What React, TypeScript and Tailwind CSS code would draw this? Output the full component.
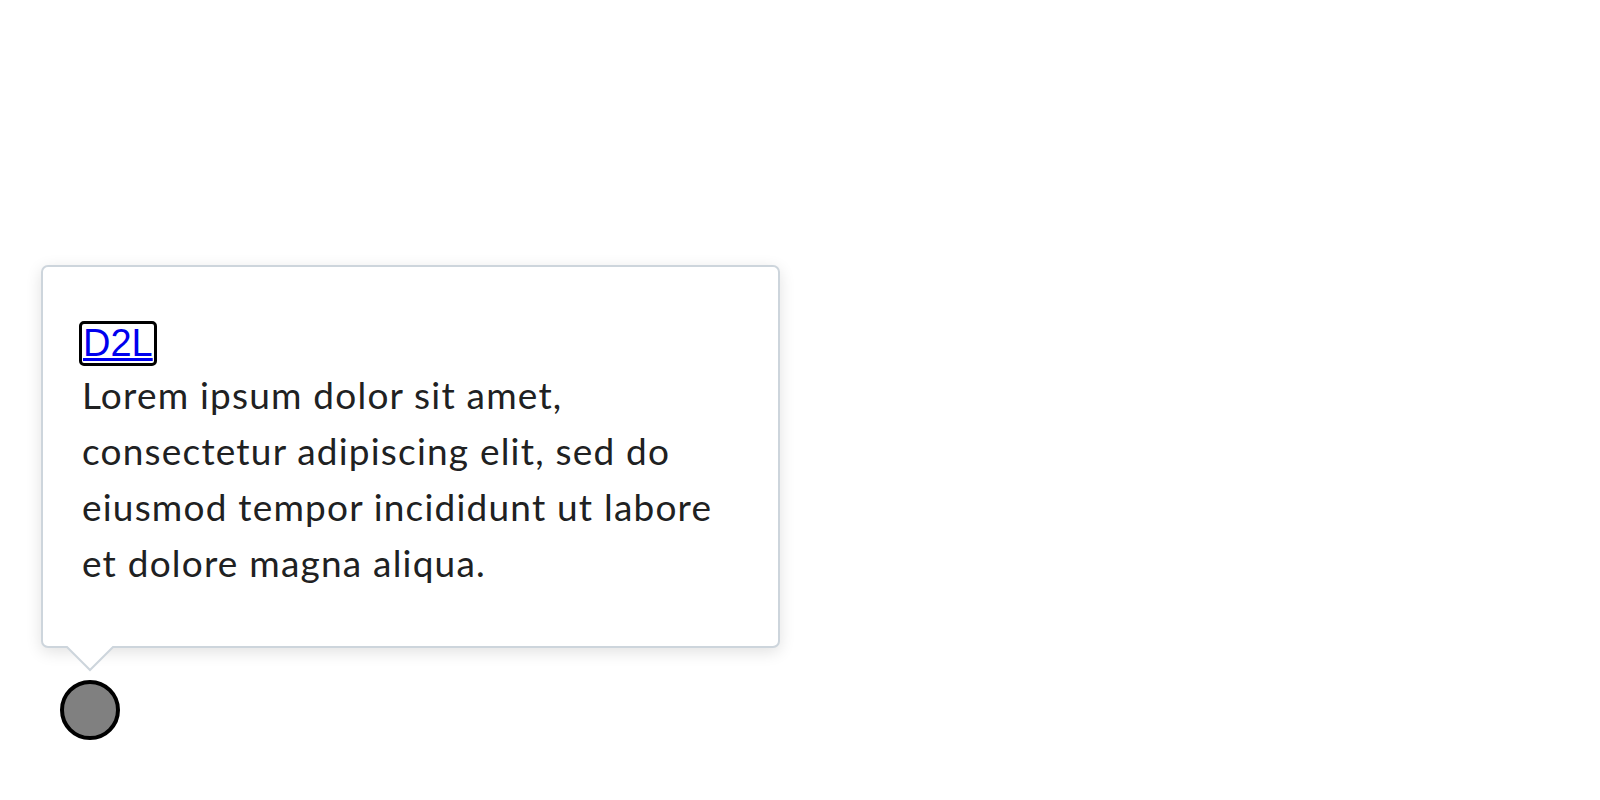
export default function App() {
  return (
    <div className="relative h-[800px] w-[1600px] bg-white">
      {/* target */}
      <div className="pl-[60px] pt-[680px]">
        <div className="h-[60px] w-[60px] rounded-full border-[4px] border-black bg-[#808080]" />
      </div>

      {/* tooltip */}
      <div className="absolute left-[41px] top-[265px] flex w-[739px] flex-col">
        <div className="rounded-[7px] border-2 border-[#cdd5dc] bg-white px-[39px] pt-[44px] pb-[55px] shadow-[0_4px_16px_rgba(0,0,0,0.12)] font-['Lato',sans-serif] text-[37px] leading-[56px] tracking-[1.2px] text-[#202122]">
          <div>
            <a
              href="#"
              className="-ml-[3px] inline-block align-[-3px] rounded-[5px] border-[3px] border-black px-[1px] leading-[39px] text-[38px] tracking-normal text-[#0000ee] underline font-['Liberation_Sans',Arial,sans-serif]"
            >
              D2L
            </a>
          </div>
          <div>
            Lorem ipsum dolor sit amet,
            <br />
            consectetur adipiscing elit, sed do
            <br />
            eiusmod tempor incididunt ut labore
            <br />
            et dolore magna aliqua.
          </div>
        </div>
        {/* arrow */}
        <svg className="-mt-[2px] ml-[24px]" width="50" height="28" viewBox="0 0 50 28">
          <polygon points="1,0 25,24 49,0" fill="#ffffff" />
          <polyline points="1,0 25,24 49,0" fill="none" stroke="#cdd5dc" strokeWidth="2" />
        </svg>
      </div>
    </div>
  )
}
